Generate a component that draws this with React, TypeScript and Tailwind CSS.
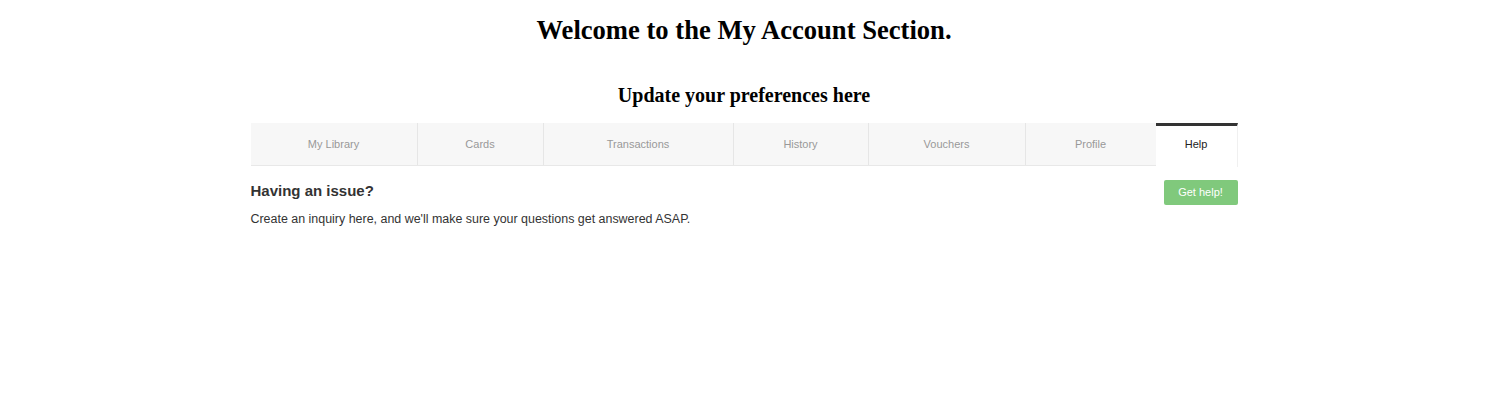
import React, { useState } from 'react';

const tabs = [
  { name: 'My Library', width: 'w-[167px]' },
  { name: 'Cards', width: 'w-[126px]' },
  { name: 'Transactions', width: 'w-[190px]' },
  { name: 'History', width: 'w-[135px]' },
  { name: 'Vouchers', width: 'w-[157px]' },
  { name: 'Profile', width: 'w-[130px]' },
  { name: 'Help', width: 'w-[82px]' },
];

export default function App() {
  const [active, setActive] = useState('Help');

  return (
    <div className="min-h-[400px] w-[1488px] bg-white">
      <h1 className="pt-[14px] text-center text-[26.6px] leading-[32px] font-bold text-black font-['Liberation_Serif',serif]">
        Welcome to the My Account Section.
      </h1>
      <h2 className="mt-[37px] text-center text-[20px] leading-[24px] font-bold text-black font-['Liberation_Serif',serif]">
        Update your preferences here
      </h2>

      <div className="mx-auto mt-[16px] w-[987px] font-['Liberation_Sans',Arial,sans-serif]">
        <div className="flex h-[43px] border-b border-[#e8e8e8] bg-[#f7f7f7]">
          {tabs.map((tab, i) => {
            const isActive = tab.name === active;
            return (
              <button
                key={tab.name}
                type="button"
                onClick={() => setActive(tab.name)}
                className={`${tab.width} flex items-center justify-center text-[11px] ${
                  i < tabs.length - 1 && tabs[i + 1].name !== active ? 'border-r border-[#e6e6e6]' : ''
                } ${
                  isActive
                    ? 'mb-[-1px] h-[44px] border-t-[3px] border-r border-t-[#333] border-r-[#f0f0f0] bg-white pb-[4px] text-[#222]'
                    : 'text-[#999]'
                }`}
              >
                {tab.name}
              </button>
            );
          })}
        </div>

        <div className="mt-[14px] flex items-start justify-between">
          <div>
            <h3 className="mt-[2px] text-[15px] leading-[18px] font-bold text-[#333]">Having an issue?</h3>
            <p className="mt-[12px] text-[12.45px] leading-[15px] text-[#333]">
              Create an inquiry here, and we'll make sure your questions get answered ASAP.
            </p>
          </div>
          <button
            type="button"
            className="h-[25px] w-[74px] rounded-[2px] bg-[#80c97c] text-[11px] text-white"
          >
            Get help!
          </button>
        </div>
      </div>
    </div>
  );
}
